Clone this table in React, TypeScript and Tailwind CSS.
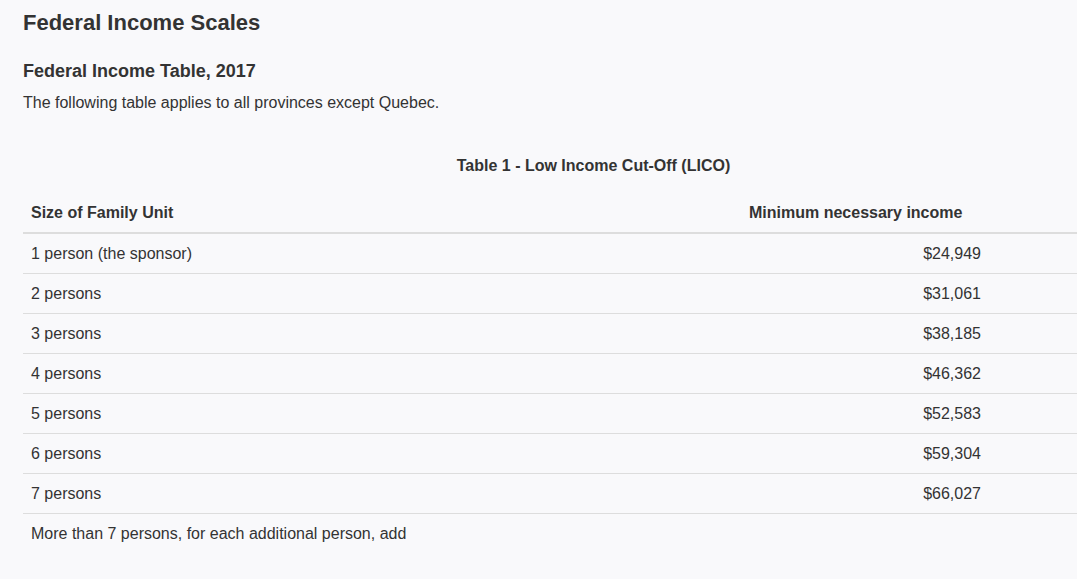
const rows: [string, string][] = [
  ["1 person (the sponsor)", "$24,949"],
  ["2 persons", "$31,061"],
  ["3 persons", "$38,185"],
  ["4 persons", "$46,362"],
  ["5 persons", "$52,583"],
  ["6 persons", "$59,304"],
  ["7 persons", "$66,027"],
]

export default function App() {
  return (
    <div
      className="min-h-screen w-full overflow-hidden bg-[#f9f9fb] text-[#333333]"
      style={{ fontFamily: '"Liberation Sans", Arial, sans-serif' }}
    >
      <div className="pl-[23px] pt-[11px]">
        <h1 className="text-[22px] font-bold leading-[24px]">Federal Income Scales</h1>
        <h2 className="mt-[26px] text-[18px] font-bold leading-[20px]">Federal Income Table, 2017</h2>
        <p className="mt-[11px] text-[16px] leading-[22px]">
          The following table applies to all provinces except Quebec.
        </p>

        {/* LICO table, wider than the window on the right */}
        <div className="mt-[41px] w-[1141px]">
          <div className="text-center text-[16px] font-bold leading-[22px]">
            Table 1 - Low Income Cut-Off (LICO)
          </div>

          <div className="mt-[17px] grid grid-cols-[718px_248px_1fr] border-b-2 border-[#dddddd] text-[16px] font-bold leading-[22px]">
            <div className="px-2 py-2">Size of Family Unit</div>
            <div className="px-2 py-2">Minimum necessary income</div>
            <div />
          </div>

          {rows.map(([size, amount]) => (
            <div
              key={size}
              className="grid h-[40px] grid-cols-[718px_248px_1fr] items-center border-b border-[#dddddd] text-[16px] leading-[22px]"
            >
              <div className="px-2">{size}</div>
              <div className="px-2 text-right">{amount}</div>
              <div />
            </div>
          ))}

          <div className="grid h-[40px] grid-cols-[718px_248px_1fr] items-center text-[16px] leading-[22px]">
            <div className="px-2">More than 7 persons, for each additional person, add</div>
            <div className="px-2 text-right" />
            <div />
          </div>
        </div>
      </div>
    </div>
  )
}
